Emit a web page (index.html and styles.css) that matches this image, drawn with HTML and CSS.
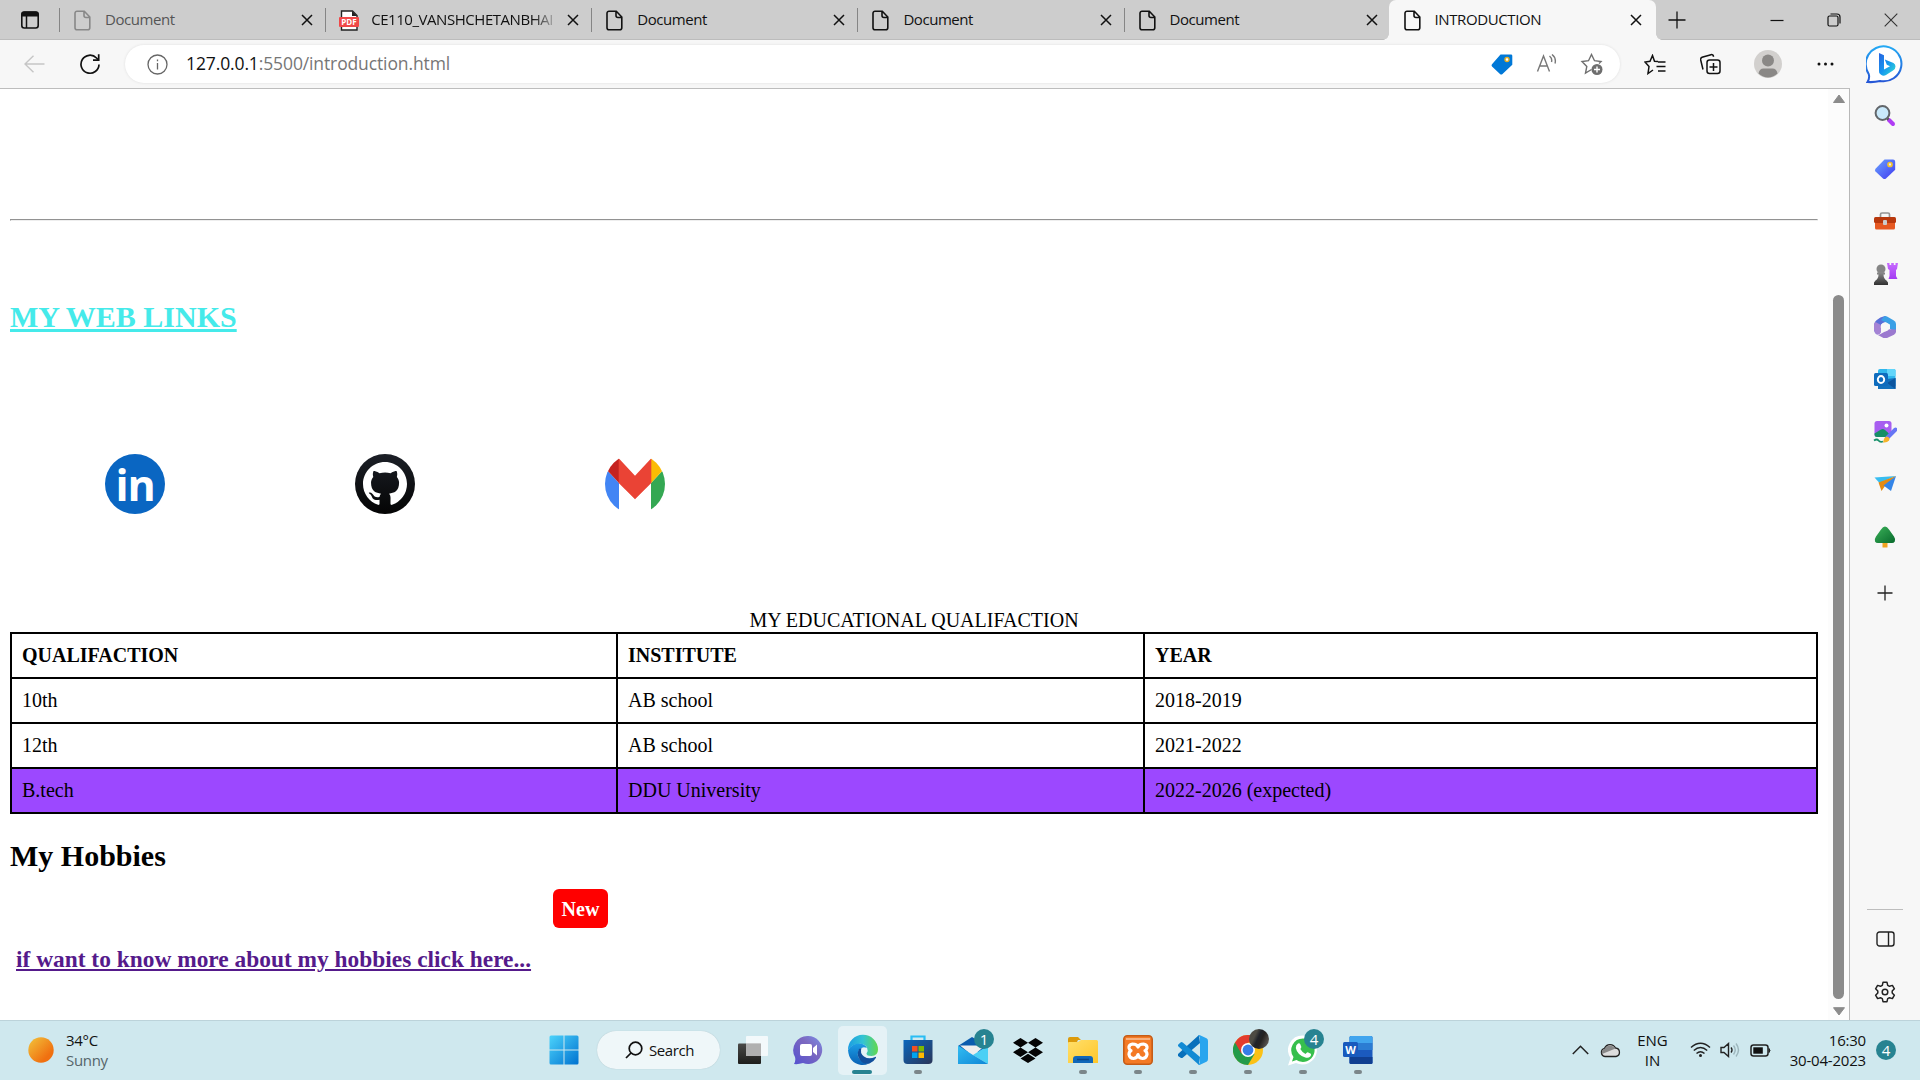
FILE: index.html
```html
<!DOCTYPE html>
<html lang="en">
<head>
<meta charset="utf-8">
<title>INTRODUCTION</title>
<link rel="stylesheet" href="styles.css">
</head>
<body>
<svg class="defs" width="0" height="0" aria-hidden="true">
  <defs>
    <symbol id="doc" viewBox="0 0 17 21"><path d="M3 1.200h7.300L15.800 7v10.800a2 2 0 0 1-2 2H3a2 2 0 0 1-2-2V3.200a2 2 0 0 1 2-2zM10 1.500V5.500a2 2 0 0 0 2 2h3.500" fill="none" stroke="currentColor" stroke-width="1.600"/></symbol>
    <symbol id="x" viewBox="0 0 12 12"><path d="M1 1l10 10M11 1L1 11" fill="none" stroke="currentColor" stroke-width="1.500"/></symbol>
    <linearGradient id="gWin" x1="0" y1="0" x2="1" y2="1"><stop offset="0" stop-color="#4cd3fb"/><stop offset="1" stop-color="#0072d0"/></linearGradient>
    <linearGradient id="gBing" x1="0" y1="0" x2="0" y2="1"><stop offset="0" stop-color="#24a9f4"/><stop offset="1" stop-color="#2556d6"/></linearGradient>
    <linearGradient id="gB" x1="0" y1="0" x2="1" y2="1"><stop offset="0" stop-color="#2a62e0"/><stop offset=".5" stop-color="#1596ef"/><stop offset="1" stop-color="#35e0d0"/></linearGradient>
    <linearGradient id="gTag" x1="0" y1="0" x2="1" y2="1"><stop offset="0" stop-color="#6aa4ff"/><stop offset="1" stop-color="#4038f0"/></linearGradient>
    <linearGradient id="gPurple" x1="0" y1="0" x2="0" y2="1"><stop offset="0" stop-color="#c76bff"/><stop offset="1" stop-color="#a43cf2"/></linearGradient>
    <linearGradient id="gPawn" x1="0" y1="0" x2="0" y2="1"><stop offset="0" stop-color="#8b8b8b"/><stop offset="1" stop-color="#303030"/></linearGradient>
    <linearGradient id="gTree" x1="0" y1="0" x2="1" y2="1"><stop offset="0" stop-color="#3cb35a"/><stop offset="1" stop-color="#08692c"/></linearGradient>
    <linearGradient id="gSun" x1="0" y1="0" x2="1" y2="1"><stop offset="0" stop-color="#f2c53c"/><stop offset=".75" stop-color="#f07010"/></linearGradient>
    <linearGradient id="gChat" x1="1" y1="0" x2="0" y2="1"><stop offset="0" stop-color="#7b8fe8"/><stop offset=".4" stop-color="#7c68c0"/><stop offset="1" stop-color="#5451d0"/></linearGradient>
    <linearGradient id="gEdge" x1="0" y1="0" x2="1" y2="0"><stop offset="0" stop-color="#1b9de2"/><stop offset=".5" stop-color="#33c4d4"/><stop offset="1" stop-color="#62d84c"/></linearGradient>
    <linearGradient id="gEdge2" x1="0" y1="0" x2="0" y2="1"><stop offset="0" stop-color="#1c9ee6"/><stop offset="1" stop-color="#0a61b4"/></linearGradient>
    <linearGradient id="gStore" x1="0" y1="0" x2="1" y2="1"><stop offset="0" stop-color="#0a67bd"/><stop offset="1" stop-color="#2a3558"/></linearGradient>
    <linearGradient id="gMail" x1="0" y1="0" x2="1" y2="1"><stop offset="0" stop-color="#32bdf2"/><stop offset="1" stop-color="#0f86d6"/></linearGradient>
    <linearGradient id="gFold" x1="0" y1="0" x2="1" y2="1"><stop offset="0" stop-color="#ffdf6b"/><stop offset="1" stop-color="#ffc629"/></linearGradient>
    <linearGradient id="gDark" x1="0" y1="0" x2="0" y2="1"><stop offset="0" stop-color="#4a4a48"/><stop offset="1" stop-color="#1d1d1b"/></linearGradient>
    <linearGradient id="gGit" x1="0" y1="0" x2="0" y2="1"><stop offset="0" stop-color="#1c2027"/><stop offset="1" stop-color="#040404"/></linearGradient>
    <clipPath id="round"><circle cx="30" cy="30" r="30"/></clipPath>
  </defs>
</svg>

<div class="screen">
  <header class="tabbar">
    <div class="tab-actions"><svg width="20" height="20" viewBox="0 0 20 20"><rect x="1.800" y="2" width="16.400" height="16" rx="2.500" fill="none" stroke="#111" stroke-width="1.600"/><path d="M1.500 6.500V4a2.500 2.500 0 0 1 2.500-2.500h12A2.500 2.500 0 0 1 18.500 4v2.500z" fill="#111"/><path d="M6.500 6v12" stroke="#111" stroke-width="1.500"/></svg></div>
    <div class="tab faded"><svg class="fav"><use href="#doc"/></svg><span class="title">Document</span><svg class="close"><use href="#x"/></svg></div>
    <div class="tab"><svg class="fav pdf" viewBox="0 0 20 21"><path d="M2.500 1h11L18 5.500V20H2.500z" fill="#fff" stroke="#222" stroke-width="1.400"/><path d="M13 1v5h5" fill="#222"/><rect x="0" y="7" width="20" height="10" rx="1" fill="#f04848"/><text x="10" y="15" text-anchor="middle" class="pdf-text">PDF</text></svg><span class="title clipped">CE110_VANSHCHETANBHAI</span><svg class="close"><use href="#x"/></svg></div>
    <div class="tab"><svg class="fav"><use href="#doc"/></svg><span class="title">Document</span><svg class="close"><use href="#x"/></svg></div>
    <div class="tab"><svg class="fav"><use href="#doc"/></svg><span class="title">Document</span><svg class="close"><use href="#x"/></svg></div>
    <div class="tab"><svg class="fav"><use href="#doc"/></svg><span class="title">Document</span><svg class="close"><use href="#x"/></svg></div>
    <div class="tab active"><svg class="fav"><use href="#doc"/></svg><span class="title intro">INTRODUCTION</span><svg class="close"><use href="#x"/></svg></div>
    <div class="new-tab"><svg width="18" height="18"><path d="M9 .5v17M.5 9h17" stroke="#111" stroke-width="1.300"/></svg></div>
    <div class="window-buttons">
      <span><svg width="14" height="14"><path d="M.5 7.500h13" stroke="#111" stroke-width="1.200"/></svg></span>
      <span><svg width="14" height="14" fill="none" stroke="#111" stroke-width="1.200"><rect x="1" y="3" width="10" height="10" rx="1.500"/><path d="M3.500 1h6.500a3 3 0 0 1 3 3v6.500"/></svg></span>
      <span><svg width="14" height="14"><path d="M.7.7l12.600 12.600M13.300.7L.7 13.300" stroke="#333" stroke-width="1.100"/></svg></span>
    </div>
  </header>

  <div class="toolbar">
    <div class="tool back"><svg width="21" height="18" fill="none" stroke="#c6c6c6" stroke-width="1.400"><path d="M20.500 9H1M9.500 .8L1 9l8.500 8.200"/></svg></div>
    <div class="tool reload"><svg width="22" height="22" fill="none" stroke="#111" stroke-width="1.700"><path d="M20 11.500A9 9 0 1 1 17.500 5L19.500 7"/><path d="M19.700 1.300V7.200H14"/></svg></div>
    <div class="address">
      <svg class="info" width="21" height="21" fill="none" stroke="#666" stroke-width="1.300"><circle cx="10.500" cy="10.500" r="9.500"/><path d="M10.500 9v6.500M10.500 5.500v1.800"/></svg>
      <span class="url"><b>127.0.0.1</b>:5500/introduction.html</span>
      <span class="addr-icon"><svg width="22" height="22"><path d="M9.500 1.500H20q1.300 0 1.300 1.300v9L11.500 21q-1.300 1-2.500 0L1 13.500q-1-1.200 0-2.300z" fill="#0078d7"/><circle cx="16" cy="6.500" r="2" fill="#fff" stroke="#e5ad22" stroke-width="1.400"/></svg></span>
      <span class="addr-icon"><svg width="21" height="20" fill="none" stroke="#777" stroke-width="1.400"><path d="M1.500 17.500L7.500 2l6 15.500M3.700 12h7.600M13.500 2q3 2.500 2 6M16 .5q4.500 3.500 3 9"/></svg></span>
      <span class="addr-icon"><svg width="24" height="23" fill="none" stroke="#6e6e6e" stroke-width="1.400"><path d="M11.500 16.500L5.500 20l1.300-6.500L2 8.500l6.500-.8L11.500 1.500l3 6.200 6.500.8-2 2"/><circle cx="17" cy="16.500" r="5.500" fill="#6e6e6e" stroke="none"/><path d="M17 13.500v6M14 16.500h6" stroke="#fff"/></svg></span>
    </div>
    <div class="tool w55"><svg width="22" height="21" fill="none" stroke="#111" stroke-width="1.500"><path d="M14 7.500l-3.500-.3L8.500 1.500 6 7.200 1 8l4 4.500L4 19.500l5-3.500M14 8h7.500M12.500 12.500h9M14 17h7.500"/></svg></div>
    <div class="tool w56"><svg width="22" height="22" fill="none" stroke="#111" stroke-width="1.500"><rect x="8" y="7" width="13" height="13.500" rx="2.500"/><path d="M14.500 10v8M10.500 14h8M4 16.500L1.700 7Q1.300 5 3 4.300l9-2.600q2-.5 2.600 2"/></svg></div>
    <div class="tool w58"><svg width="28" height="28"><circle cx="14" cy="14" r="14" fill="#d2d0ce"/><circle cx="14" cy="10.500" r="6" fill="#8a8886"/><path d="M4.500 23.500q1-5 5-5h9q4 0 5 5Q19 27.500 14 27.500T4.500 23.500z" fill="#8a8886"/></svg></div>
    <div class="tool w56"><svg width="17" height="4" fill="#111"><circle cx="2" cy="2" r="1.500"/><circle cx="8.500" cy="2" r="1.500"/><circle cx="15" cy="2" r="1.500"/></svg></div>
    <div class="tool w64"><svg width="39" height="39"><path d="M20 1.500a18 17.500 0 1 1-6 34.500Q8 37.500 1.500 37q2.500-4 1.200-8A17.800 17.800 0 0 1 20 1.500z" fill="#fff" stroke="url(#gBing)" stroke-width="2"/><path d="M13 8l5 2.200v14.300l6-3.300-3.200-1.500-2-5.200 8.700 3.500q2 1 2 3.500t-2.500 4l-7 4.500q-2.500 1.500-5-.2T13 26z" fill="url(#gB)"/></svg></div>
  </div>

  <div class="body">
    <main class="page">
      <hr>
      <h2 class="links-title">MY WEB LINKS</h2>
      <div class="socials">
        <svg width="60" height="60"><circle cx="30" cy="30" r="30" fill="#0a66c2"/><text x="10.500" y="47" class="in-text">in</text></svg>
        <svg width="60" height="60"><circle cx="30" cy="30" r="30" fill="url(#gGit)"/><path transform="translate(8 8) scale(2.750)" fill="#fff" d="M8 0C3.580 0 0 3.580 0 8c0 3.540 2.290 6.530 5.470 7.590.4.070.55-.17.55-.38 0-.19-.01-.82-.01-1.490-2.010.37-2.530-.49-2.690-.94-.09-.23-.48-.94-.82-1.130-.28-.15-.68-.52-.01-.53.63-.01 1.080.58 1.230.82.72 1.210 1.870.87 2.330.66.070-.52.28-.87.51-1.070-1.780-.2-3.640-.89-3.640-3.950 0-.87.31-1.590.82-2.150-.08-.2-.36-1.020.08-2.120 0 0 .67-.21 2.200.82.64-.18 1.320-.27 2-.27.68 0 1.360.09 2 .27 1.530-1.040 2.200-.82 2.200-.82.44 1.100.16 1.920.08 2.120.51.56.82 1.270.82 2.150 0 3.070-1.870 3.750-3.650 3.950.29.25.54.73.54 1.480 0 1.070-.01 1.930-.01 2.200 0 .21.15.46.55.38A8.013 8.013 0 0 0 16 8c0-4.420-3.580-8-8-8z"/></svg>
        <svg width="60" height="60"><g clip-path="url(#round)"><path d="M0 14l14 15v27H0z" fill="#4285f4"/><path d="M60 14L46 29v27h14z" fill="#34a853"/><path d="M14 4.300L0 4v10l14 15z" fill="#c5221f"/><path d="M46 4.300L60 4v10L46 29z" fill="#fbbc04"/><path d="M13.700 4.300L30 21.700 46.300 4.300V29L30 45.300 13.700 29z" fill="#ea4335"/></g></svg>
      </div>
      <table>
        <caption>MY EDUCATIONAL QUALIFACTION</caption>
        <colgroup><col class="c1"><col class="c2"><col class="c3"></colgroup>
        <tr><th>QUALIFACTION</th><th>INSTITUTE</th><th>YEAR</th></tr>
        <tr><td>10th</td><td>AB school</td><td>2018-2019</td></tr>
        <tr><td>12th</td><td>AB school</td><td>2021-2022</td></tr>
        <tr class="current"><td>B.tech</td><td>DDU University</td><td>2022-2026 (expected)</td></tr>
      </table>
      <h2 class="hobbies-title">My Hobbies</h2>
      <div class="hobbies"><a href="#">if want to know more about my hobbies click here...</a><span class="new">New</span></div>
    </main>
    <div class="scrollbar">
      <svg width="12" height="9"><path d="M6 1l5.500 7.500H.5z" fill="#8b8b8b" stroke="#8b8b8b" stroke-linejoin="round"/></svg>
      <div class="thumb"></div>
      <svg width="12" height="9"><path d="M6 8L.5.7h11z" fill="#8b8b8b" stroke="#8b8b8b" stroke-linejoin="round"/></svg>
    </div>
    <aside class="sidebar">
      <span><svg width="22" height="22"><path d="M15 15l4 4" stroke="#b03cf4" stroke-width="4" stroke-linecap="round"/><path d="M12 12l2.500 2.500" stroke="#555" stroke-width="2.500"/><circle cx="8.500" cy="8" r="6.900" fill="#c9e9fb" stroke="#62666a" stroke-width="2"/></svg></span>
      <span><svg width="22" height="22"><path d="M10.500 1.500H19q2.200 0 2.200 2.200v8L12 20.500q-1.500 1.200-3 0L1.500 13.500q-1.200-1.300 0-2.700z" fill="url(#gTag)"/><circle cx="16" cy="6.500" r="2" fill="#e8e8ff" stroke="#f2c22c" stroke-width="1.700"/></svg></span>
      <span><svg width="24" height="20"><path d="M7.500 7V3.500q0-1.500 1.500-1.500h6q1.500 0 1.500 1.500V7" fill="none" stroke="#949494" stroke-width="1.700"/><path d="M2 9h20v8q0 1.500-1.500 1.500h-17Q2 18.500 2 17z" fill="#e65821"/><rect x="1" y="6" width="22" height="6" rx="1.500" fill="#b8380d"/><rect x="10" y="9" width="4" height="5" rx="1" fill="#ccc"/></svg></span>
      <span><svg width="25" height="24"><path d="M14 1h2.500v2h1.700V1h2.600v2h1.700V1H25l-1 6-1 1v6l1.500 3h-9L16.500 14V8L15 7z" fill="url(#gPurple)"/><circle cx="8" cy="7" r="4.500" fill="#858585"/><path d="M4 10.500h8v2h-1.500q0 4 3 6l1.500 2V23H1v-2.500l1.500-2q3-2 3-6H4z" fill="url(#gPawn)"/></svg></span>
      <span><svg width="22" height="22"><path d="M11 0Q6 1 2.500 4.200 0 6 0 9v5q.5 3 3 4.500l4-2.500V8.500L15 4z" fill="#5a6fd8"/><path d="M10 .4q1.500-.8 3 0l6.500 3.800Q22 5.500 22 8v8.500L16 13V8.500L7 4z" fill="#3ba0e6"/><path d="M22 13.500v2q0 2-2 3.200L13 22q-2 .6-4-.3l-6-3.200q2 .8 4-.8l8-4.500z" fill="#9b79cf"/><path d="M0 9v5q.5 3.500 3 4.500 3 .5 4-2.500V9L1.500 6Q0 7 0 9z" fill="#a583d4"/><path d="M11 6.500q4 0 4.300 4.500-.3 4-4.300 4.500-4-.5-4.300-4.500Q7 6.500 11 6.500z" fill="#f7f7f7"/></svg></span>
      <span><svg width="22" height="22"><path d="M4 3q0-2 2-2h14q1.500 0 1.500 1.500V18H4z" fill="#30b7ed"/><path d="M13 1h7q1.500 0 1.500 1.500V8H13z" fill="#62d5fa"/><path d="M4 21V12l17.500-2v11z" fill="#1471bd"/><path d="M21.500 10L13 15l8.500 6z" fill="#0c559f"/><rect x="0" y="5" width="14" height="13" rx="1.500" fill="#0f6cbd"/><ellipse cx="7" cy="11.500" rx="3.200" ry="3.500" fill="none" stroke="#fff" stroke-width="1.900"/></svg></span>
      <span><svg width="24" height="24"><rect x="1.500" y="1" width="17" height="16" rx="2.500" fill="#a75ef0"/><path d="M1.500 13.500L8 9.500q2-1 4 .5l5 4.500-2 2.500H4Q1.500 17 1.500 14z" fill="#168f65"/><circle cx="13.500" cy="5.500" r="2" fill="#fff"/><path d="M14 18l8.500-8.500" stroke="#6675f5" stroke-width="4" stroke-linecap="round"/><path d="M10 22.500q1-6 4-6 3.500 1 2 4-2 2.500-6 2z" fill="#f6b42a"/><path d="M1 20.500q3-2 4.500 0t4.500 1" fill="none" stroke="#17916a" stroke-width="1.700"/></svg></span>
      <span><svg width="23" height="20"><path d="M.5 3.500L22 2 5.500 9z" fill="#38bdf0"/><path d="M22 2L4.500 8.500l3 8.500 3.500-5z" fill="#e58b13"/><path d="M22 2L9.500 11.500 17 17z" fill="#3485e8"/></svg></span>
      <span><svg width="22" height="22"><rect x="8.500" y="15" width="5" height="6.500" rx=".5" fill="#f0a421"/><path d="M11 .5q2 0 4 3l5 7q2 3 .8 5t-3.800 1.500H5Q2 17.500 1 15.500t1-5l5-7q2-3 4-3z" fill="url(#gTree)"/></svg></span>
      <span class="plus"><svg width="16" height="16"><path d="M8 .5v15M.5 8h15" stroke="#222" stroke-width="1.300"/></svg></span>
      <div class="side-bottom">
        <span><svg width="19" height="16" fill="none" stroke="#222" stroke-width="1.400"><rect x="1" y="1" width="17" height="14" rx="2.500"/><path d="M12.500 1v14"/></svg></span>
        <span><svg width="22" height="22" viewBox="0 0 22 22" fill="none" stroke="#222" stroke-width="1.500"><path d="M9 1.300h4l.7 3 1.800 1 2.900-.9 2 3.400-2.200 2.200v2l2.200 2.200-2 3.400-2.900-.9-1.800 1-.7 3H9l-.7-3-1.800-1-2.900.9-2-3.400L3.800 12v-2L1.600 7.800l2-3.400 2.900.9 1.800-1z" stroke-linejoin="round"/><circle cx="11" cy="11" r="2.800"/></svg></span>
      </div>
    </aside>
  </div>

  <footer class="taskbar">
    <div class="weather"><svg width="26" height="26"><circle cx="13" cy="13" r="12.700" fill="url(#gSun)"/></svg><div class="weather-text"><span>34°C</span><span class="muted">Sunny</span></div></div>
    <div class="start"><svg width="30" height="30"><path d="M.5 2q0-1.500 1.500-1.500h12.500v14H.5zM15.500.5H28q1.500 0 1.500 1.500v12.500h-14zM.5 15.500h14v14H2Q.5 29.500.5 28zM15.500 15.500h14V28q0 1.500-1.500 1.500H15.500z" fill="url(#gWin)"/></svg></div>
    <div class="search"><svg width="18" height="18" fill="none" stroke="#111" stroke-width="1.700"><circle cx="10.500" cy="7.500" r="6.300"/><path d="M6 12L1 17"/></svg><span>Search</span></div>
    <div class="apps">
      <span class="app"><svg width="30" height="30"><rect x="0" y="8.500" width="23" height="20.500" rx="1" fill="url(#gDark)"/><rect x="8" y="1" width="22" height="20" rx="1" fill="#fff" fill-opacity=".75"/><rect x="8" y="8.500" width="15" height="12.500" fill="#b0b0b0"/></svg></span>
      <span class="app"><svg width="30" height="30"><path d="M15 1a14 14 0 1 1-5 27Q5.500 29.500 1 29q2-3 1-7A14.200 14.200 0 0 1 15 1z" fill="url(#gChat)"/><rect x="7" y="9" width="12" height="12" rx="2" fill="#fff"/><path d="M20 13l4-3.500v11L20 17z" fill="#fff"/></svg></span>
      <span class="app on"><svg width="32" height="32"><path d="M1 16A15 15 0 0 1 31 15.500Q31 22 24.500 22q-5 0-5-2.500 2-3 .5-6Q17 9 11 10 4 11 1 16z" fill="url(#gEdge)"/><path d="M1 16Q5 9.500 12 9.500q6 0 8 4.500-5-2-8 2-3 5 1 9.500 4 4 9 4Q18 31.500 14 31 2 29 1 16z" fill="url(#gEdge2)"/><path d="M12 15q-3 6 1 11t9.500 3.500q4.500-2 6.500-5.800.3-1-.8-.8Q22 26 17 22.500 12.500 19 14.500 14z" fill="#124f9c"/></svg><i></i></span>
      <span class="app"><svg width="30" height="30"><path d="M8.500 6V1.500h13V6" fill="none" stroke="#29bdf4" stroke-width="2.200"/><path d="M.5 5h29v20q0 4-4 4h-21q-4 0-4-4z" fill="url(#gStore)"/><path d="M9 11h5.500v5.500H9z" fill="#f25022"/><path d="M15.500 11H21v5.500h-5.500z" fill="#7fba00"/><path d="M9 17.500h5.500V23H9z" fill="#00a4ef"/><path d="M15.500 17.500H21V23h-5.500z" fill="#ffb900"/></svg><i></i></span>
      <span class="app"><svg width="32" height="30"><path d="M1 11L15 2l15 9v6H1z" fill="#0b5cae"/><path d="M3 10.500h25L16 21z" fill="#eee"/><path d="M31 10.500v18.500L16 20z" fill="#4bd0f5"/><path d="M1 10.500V29h30L16 20z" fill="url(#gMail)"/></svg><em>1</em></span>
      <span class="app"><svg width="30" height="27" fill="#050505"><path d="M7.500 1L15 5.700l-7.500 4.800L0 5.700zM22.500 1L30 5.700l-7.500 4.800L15 5.700zM7.500 10.500L15 15.300 7.500 20 0 15.300zM22.500 10.500l7.500 4.800-7.500 4.700-7.500-4.700zM15 16.800l7.500 4.700L15 26l-7.500-4.500z"/></svg></span>
      <span class="app"><svg width="30" height="30"><path d="M0 4q0-2 2-2h8l3 3h-3L8 9H0z" fill="#dc9a0b"/><path d="M0 8q0-1 1-1h9l3-2h15.500Q30 5 30 6.500V28H0z" fill="url(#gFold)"/><path d="M5 28v-4q0-3 3-3h14q3 0 3 3v4z" fill="#1167b9"/><path d="M9 24.500h12" stroke="#0b4586" stroke-width="1.500"/></svg><i></i></span>
      <span class="app"><svg width="30" height="30"><rect x=".8" y=".8" width="28.400" height="28.400" rx="3.500" fill="#f47a25" stroke="#c65c17" stroke-width="1.600"/><path d="M3 4h24" stroke="#f9b07c" stroke-width="2"/><path d="M9.500 9q4.500 0 5.500 3 1-3 5.500-3 4 .8 3.500 4-.4 2-2 2.700 2 .8 2 3.800-.8 4-4.500 4-4-.5-4.500-4-.5 3.500-4.500 4-3.700 0-4.500-4 0-3 2-3.800-1.600-.7-2-2.700-.5-3.200 3.500-4z" fill="none" stroke="#fff" stroke-width="3.200" stroke-linejoin="round"/></svg><i></i></span>
      <span class="app"><svg width="30" height="30"><path d="M21 0L0 19l-.2 1.800L3 23q1 .3 1.700-.3L22 8z" fill="#0870bb"/><path d="M22 22L4.700 7.400Q3.500 6.600 2.500 7.500L.3 9.600q-.8 1 .2 2L21 30z" fill="#128ad4"/><path d="M21.500 0l7 3.300Q30 4 30 6v18q0 2-1.500 2.700l-7 3.300q-1 0-1-1l1.500-1V2L20 1z" fill="#29a5ee"/></svg><i></i></span>
      <span class="app"><svg width="30" height="30"><circle cx="15" cy="15" r="15" fill="#fbc116"/><path d="M15 15L2 7.500A15 15 0 0 0 15 30l6.500-11z" fill="#239b4a"/><path d="M2 7.500A15 15 0 0 1 28 7.500H15l-6.500 11.200z" fill="#e33b2e"/><circle cx="15" cy="15" r="7" fill="#fff"/><circle cx="15" cy="15" r="5.400" fill="#377de8"/></svg><b class="avatar"></b><i></i></span>
      <span class="app"><svg width="30" height="31"><path d="M15 .5A14.500 14.500 0 1 1 8 28L0 30.500 2.500 23A14.500 14.500 0 0 1 15 .5z" fill="#fff"/><path d="M15 3.500A11.700 11.700 0 1 1 8.500 25L4 26.500 5.500 22A11.700 11.700 0 0 1 15 3.500z" fill="#37bf4c"/><path d="M10 8.500q1.500-1 2.300.8l1 2.500q.2 1-1 2.200 2 3.500 5.200 5 1.500-2 2.300-1.800l3 1.500q.8 1-.5 2.700-2 2-5 1-8-2.500-9.500-9.500 0-3 2.200-4.400z" fill="#fff"/></svg><em>4</em><i></i></span>
      <span class="app"><svg width="30" height="30"><rect x="6.500" y="1" width="23" height="28" rx="1.500" fill="#1b5abe"/><path d="M6.500 8V2.500Q6.500 1 8 1h20q1.500 0 1.500 1.500V8z" fill="#41a5ee"/><path d="M6.500 8h23v7h-23z" fill="#2b7cd3"/><path d="M6.500 22h23v5.500q0 1.500-1.500 1.500H8q-1.500 0-1.500-1.500z" fill="#103f91"/><rect x="0" y="7" width="15" height="15" rx="1.500" fill="#185abd"/><text x="7.500" y="18.500" text-anchor="middle" class="w-text">W</text></svg><i></i></span>
    </div>
    <div class="tray">
      <span class="t40"><svg width="17" height="10" fill="none" stroke="#222" stroke-width="1.500"><path d="M.8 9L8.500 1.300 16.200 9"/></svg></span>
      <span class="t20"><svg width="21" height="15"><path d="M5 13.500a4.200 4.200 0 0 1-.5-8.200 6 6 0 0 1 11-.3 4.300 4.300 0 0 1 .5 8.500z" fill="#ddd" stroke="#222" stroke-width="1.300"/><path d="M2 11Q1 7 4.500 5.700q5-6.500 11-.2L7 9z" fill="#888"/></svg></span>
      <span class="lang"><span>ENG</span><span>IN</span></span>
      <span class="t30"><svg width="21" height="16" fill="none" stroke="#222" stroke-width="1.500"><path d="M1 5.500Q10.500-3 20 5.500M3.800 8.500q6.700-6 13.400 0M6.500 11.500q4-3.500 8 0"/><circle cx="10.500" cy="13.500" r="1.500" fill="#222" stroke="none"/></svg></span>
      <span class="t30"><svg width="21" height="16" fill="none" stroke="#222" stroke-width="1.400"><path d="M1 5.500h3L8.500 1.500v13L4 10.500H1zM11 5.500q2 2.500 0 5"/><path d="M13.500 3.500q3.500 4.500 0 9M16 1.500q5 6.500 0 13" stroke="#9db6bc"/></svg></span>
      <span class="t30"><svg width="21" height="13"><rect x="1" y="1" width="17" height="11" rx="2.500" fill="none" stroke="#222" stroke-width="1.500"/><rect x="3.300" y="3.300" width="9.500" height="6.400" fill="#111"/><path d="M19 4.500q2 2 0 4z" fill="#222" stroke="#222"/></svg></span>
      <span class="clock"><span>16:30</span><span>30-04-2023</span></span>
      <span class="count">4</span>
    </div>
  </footer>
</div>
</body>
</html>
```
FILE: styles.css
```css
* { box-sizing: border-box; }
body { margin: 0; background: #fff; font-family: "Open Sans", "Noto Sans", sans-serif; color: #111; }
svg { display: block; flex: none; }
.defs { position: absolute; }
.screen { width: 1920px; height: 1080px; overflow: hidden; display: flex; flex-direction: column; }

/* Tab strip */
.tabbar { height: 40px; flex: none; display: flex; background: #cdcdcd; border-bottom: 1px solid #bcbcbc; font-size: 15px; }
.tab-actions { width: 60px; display: flex; align-items: center; justify-content: center; border-right: 1px solid #858585; height: 24px; margin-top: 8px; }
.tab { width: 266.150px; height: 24px; margin-top: 8px; padding-left: 14px; padding-right: 12px; display: flex; align-items: center; border-right: 1px solid #858585; }
.tab:nth-child(6) { width: 264px; border-right-color: transparent; }
.tab:nth-child(6) .close { margin-right: -2px; }
.tab .fav { width: 17px; height: 21px; margin-right: 14px; }
.tab .fav.pdf { width: 20px; margin-right: 12px; margin-left: -1px; }
.tab .title { flex: 1; letter-spacing: -0.45px; white-space: nowrap; overflow: hidden; line-height: 22px; height: 24px; }
.tab .clipped { letter-spacing: -0.45px; margin-right: 8px; -webkit-mask-image: linear-gradient(90deg, #000 86%, transparent); mask-image: linear-gradient(90deg, #000 86%, transparent); }
.tab .intro { letter-spacing: -0.4px; }
.tab .close { width: 12px; height: 12px; }
.tab.faded .fav, .tab.faded .title { color: #555; }
.tab.faded .fav { color: #888; }
.tab.active { position: relative; width: 267px; height: 40px; margin-top: 0; padding: 0 14px 0 15px; background: #f7f7f7; border: 0; border-radius: 7px 7px 0 0; }
.tab.active::before, .tab.active::after { content: ""; position: absolute; bottom: 0; width: 6px; height: 6px; }
.tab.active::before { left: -6px; background: radial-gradient(circle at 0 0, transparent 5.5px, #f7f7f7 6px); }
.tab.active::after { right: -6px; background: radial-gradient(circle at 100% 0, transparent 5.5px, #f7f7f7 6px); }
.new-tab { width: 42px; display: flex; align-items: center; justify-content: center; }
.window-buttons { margin-left: auto; display: flex; width: 172px; }
.window-buttons span { width: 57.3px; display: flex; align-items: center; justify-content: center; }

/* Address row */
.toolbar { height: 48px; flex: none; display: flex; align-items: center; background: #f7f7f7; }
.tool { display: flex; align-items: center; justify-content: center; flex: none; }
.back { width: 69px; padding-bottom: 1px; }
.reload { width: 42px; margin-right: 14px; padding-bottom: 1px; }
.w55 { width: 55px; margin-left: 7px; }
.w56 { width: 56px; }
.w58 { width: 59px; }
.w64 { width: 64px; }
.address { width: 1495px; height: 38px; flex: none; border-radius: 19px; background: #fff; display: flex; align-items: center; padding: 0 6px 0 22px; box-shadow: 0 0 3px rgba(0, 0, 0, .1); }
.url { flex: 1; margin-left: 18px; padding-bottom: 2px; font-size: 17.500px; letter-spacing: -0.12px; color: #767676; white-space: nowrap; }
.url b { font-weight: 400; color: #111; }
.addr-icon { width: 45px; display: flex; justify-content: center; }

/* Document */
.body { height: 932px; flex: none; display: flex; }
.page { width: 1828px; border-top: 1px solid #bdbdbd; padding: 0 10px; font-family: "Liberation Serif", "Times New Roman", serif; font-size: 20px; color: #000; line-height: 23px; }
.page hr { margin: 130px 0 0; height: 2px; border: 1px solid #eee; border-top-color: #929292; border-left-color: #929292; }
.page h2 { font-size: 30px; line-height: 34px; }
.links-title { margin: 79px 0 0; color: #45eaea; text-decoration: underline; }
.socials { margin: 120px 0 95px 95px; display: flex; gap: 190px; }
table { width: 1808px; table-layout: fixed; border-collapse: collapse; }
caption { padding: 0; }
.c1 { width: 606px; }
.c2 { width: 527px; }
th, td { border: 2px solid #000; padding: 10px; text-align: left; height: 45px; }
.current { background: #9c48ff; }
.hobbies-title { margin: 25px 0 16px; }
.hobbies { display: flex; height: 84px; padding-left: 6px; }
.hobbies a { width: 537px; margin-top: 57px; font-size: 23.400px; line-height: 27px; font-weight: 700; color: #551a8b; white-space: nowrap; }
.new { width: 55px; height: 39px; border-radius: 6px; background: #f00; color: #fff; font-weight: 700; text-align: center; line-height: 41px; }

.scrollbar { width: 22px; flex: none; padding: 5px 0 3px; display: flex; flex-direction: column; align-items: center; background: #fcfcfc; border-top: 1px solid #bdbdbd; border-right: 1px solid #b8b8b8; }
.thumb { width: 11px; height: 704px; margin: 192px 0 8px; border-radius: 6px; background: #8b8b8b; }

.sidebar { width: 70px; flex: none; padding-top: 2px; background: #f7f7f7; display: flex; flex-direction: column; align-items: center; }
.sidebar span { height: 52.600px; display: flex; align-items: center; justify-content: center; }
.sidebar > .plus { margin-top: 4px; height: 52px; }
.side-bottom { margin-top: auto; width: 36px; height: 111px; border-top: 1px solid #bdbdbd; padding-top: 3px; }

/* Taskbar */
.taskbar { height: 60px; flex: none; display: flex; align-items: center; background: #cfe8ee; border-top: 1px solid #bcd3da; font-size: 15px; line-height: 20px; padding-bottom: 1px; }
.weather { width: 535px; padding-left: 28px; display: flex; align-items: center; gap: 12px; }
.weather-text { display: flex; flex-direction: column; letter-spacing: -0.3px; }
.muted { color: #56656a; }
.start { width: 62px; display: flex; padding-left: 14px; }
.search { width: 123px; height: 38px; border-radius: 19px; background: #eff7f9; box-shadow: 0 0 1px #9fb9c0; display: flex; align-items: center; padding-left: 28px; gap: 6px; margin-right: 5px; letter-spacing: -0.4px; }
.apps { display: flex; }
.app { position: relative; width: 55px; height: 58px; display: flex; align-items: center; justify-content: center; }
.app.on::before { content: ""; position: absolute; left: 3px; top: 5px; width: 49px; height: 49px; border-radius: 5px; background: #e5f2f6; }
.app.on svg { position: relative; }
.app i { position: absolute; bottom: 5px; left: 23.500px; width: 8px; height: 4px; border-radius: 2px; background: #7b868a; }
.app.on i { left: 17px; width: 20px; background: #278391; }
.app em, .count { width: 20px; height: 20px; border-radius: 50%; background: #278391; color: #fff; font-style: normal; text-align: center; line-height: 20px; }
.app em, .avatar { position: absolute; top: 8px; right: 6px; }
.avatar { width: 20px; height: 20px; border-radius: 50%; background: linear-gradient(115deg, #4c4b43 30%, #20242a 45%, #252321 60%, #77706a); }
.tray { margin-left: auto; width: 360px; display: flex; align-items: center; }
.tray > span { flex: none; }
.t40, .t20, .t30 { display: flex; justify-content: center; }
.t40 { width: 40px; }
.t20 { width: 20px; }
.t30 { width: 30px; }
.lang { width: 65px; display: flex; flex-direction: column; align-items: center; }
.clock { width: 91px; display: flex; flex-direction: column; align-items: flex-end; letter-spacing: -0.2px; }
.count { margin-left: 10px; }

.pdf-text { font: 700 8px "Open Sans", sans-serif; fill: #fff; }
.in-text { font: 700 43px "Open Sans", sans-serif; fill: #fff; letter-spacing: -1px; }
.w-text { font: 700 11px "Open Sans", sans-serif; fill: #fff; }
```
